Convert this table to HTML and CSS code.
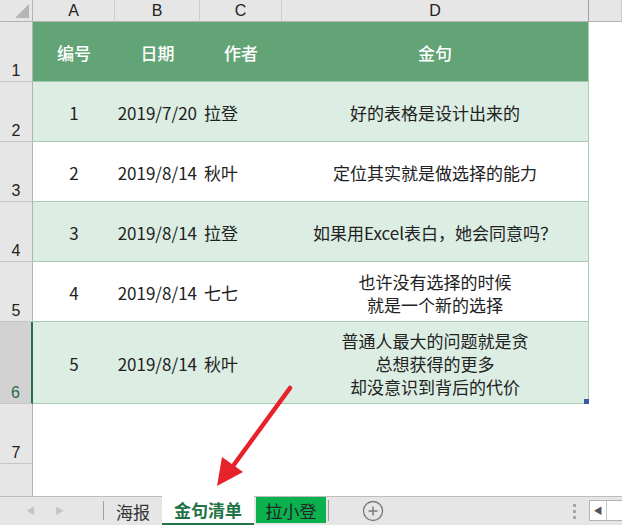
FILE: index.html
```html
<!DOCTYPE html>
<html lang="zh-CN">
<head>
  <meta charset="UTF-8" />
  <title>金句清单</title>
  <link rel="stylesheet" href="styles.css">
</head>
<body>

<div class="sheet">
  <!-- column headers -->
  <div class="corner"><span class="tri"></span></div>
  <div class="colh">A</div>
  <div class="colh">B</div>
  <div class="colh">C</div>
  <div class="colh colh-last">D</div>
  <div class="colh"></div>

  <!-- row 1 -->
  <div class="rowh">1</div>
  <div class="cell head center">编号</div>
  <div class="cell head center">日期</div>
  <div class="cell head center">作者</div>
  <div class="cell head center edge">金句</div>
  <div class="blank"></div>

  <!-- row 2 -->
  <div class="rowh">2</div>
  <div class="cell light center">1</div>
  <div class="cell light right">2019/7/20</div>
  <div class="cell light left">拉登</div>
  <div class="cell light center edge">好的表格是设计出来的</div>
  <div class="blank"></div>

  <!-- row 3 -->
  <div class="rowh">3</div>
  <div class="cell center">2</div>
  <div class="cell right">2019/8/14</div>
  <div class="cell left">秋叶</div>
  <div class="cell center edge">定位其实就是做选择的能力</div>
  <div class="blank"></div>

  <!-- row 4 -->
  <div class="rowh">4</div>
  <div class="cell light center">3</div>
  <div class="cell light right">2019/8/14</div>
  <div class="cell light left">拉登</div>
  <div class="cell light center edge">如果用Excel表白，她会同意吗？</div>
  <div class="blank"></div>

  <!-- row 5 -->
  <div class="rowh">5</div>
  <div class="cell center">4</div>
  <div class="cell right">2019/8/14</div>
  <div class="cell left">七七</div>
  <div class="cell center edge multi">也许没有选择的时候<br>就是一个新的选择</div>
  <div class="blank"></div>

  <!-- row 6 (selected) -->
  <div class="rowh rowh-sel">6</div>
  <div class="cell light center">5</div>
  <div class="cell light right">2019/8/14</div>
  <div class="cell light left">秋叶</div>
  <div class="cell light center edge multi">普通人最大的问题就是贪<br>总想获得的更多<br>却没意识到背后的代价<span class="handle"></span></div>
  <div class="blank"></div>

  <!-- row 7 -->
  <div class="rowh">7</div>
  <div class="blank span5"></div>

  <!-- row 8 -->
  <div class="rowh rowh-cut"></div>
  <div class="blank span5"></div>
</div>

<div class="tabs">
  <div class="tab-nav">
    <span class="nav-arrow">&#9664;</span>
    <span class="nav-arrow">&#9654;</span>
  </div>
  <div class="tab tab-plain">海报</div>
  <div class="tab tab-active">金句清单</div>
  <div class="tab tab-green">拉小登</div>
  <div class="tab-add">
    <svg width="22" height="22" viewBox="0 0 22 22">
      <circle cx="11" cy="11" r="9.5" fill="none" stroke="#7a7a7a" stroke-width="1.3"/>
      <path d="M11 6.5v9M6.5 11h9" stroke="#7a7a7a" stroke-width="1.5"/>
    </svg>
  </div>
  <div class="tab-dots"><i></i><i></i><i></i></div>
  <div class="hscroll"><span class="hscroll-btn">&#9664;</span></div>
</div>

<svg class="arrow" width="622" height="525" viewBox="0 0 622 525">
  <path d="M290 388 L233 466" stroke="#e8222b" stroke-width="4.5" stroke-linecap="round"/>
  <path d="M217 486 L222 457 L243 472 Z" fill="#e8222b"/>
</svg>

</body>
</html>
```

FILE: styles.css
```css
:root {
  --xl-green: #217346;
  --head: #63a476;
  --light: #dcede3;
  --line: #a6cdb3;
}

* {
  box-sizing: border-box;
}

html, body {
  margin: 0;
  height: 100%;
  overflow: hidden;
  background: #fff;
  font-family: "Noto Sans CJK SC", "Noto Sans", sans-serif;
}

.sheet {
  display: grid;
  grid-template-columns: 33px 82px 85px 82px 307px 1fr;
  grid-template-rows: 22px 60px 60px 60px 60px 60px 82px 60px 1fr;
  height: 496px;
}

.corner {
  position: relative;
  background: #e6e6e6;
  border-right: 1px solid #b3b3b3;
  border-bottom: 1px solid #b3b3b3;
}

.tri {
  position: absolute;
  right: 3px;
  bottom: 3px;
  width: 0;
  height: 0;
  border-left: 14px solid transparent;
  border-bottom: 14px solid #b5b5b5;
}

.colh {
  background: #e6e6e6;
  border-right: 1px solid #cdcdcd;
  border-bottom: 1px solid #b3b3b3;
  color: #222;
  font-family: "Liberation Sans", sans-serif;
  font-size: 16px;
  display: flex;
  align-items: center;
  justify-content: center;
  padding-top: 1px;
}

.colh-last {
  border-right-color: #9e9e9e;
}

.rowh {
  background: #e6e6e6;
  border-right: 1px solid #b3b3b3;
  border-bottom: 1px solid #c6c6c6;
  color: #222;
  font-family: "Liberation Sans", sans-serif;
  font-size: 16px;
  display: flex;
  align-items: flex-end;
  justify-content: center;
  padding-bottom: 1px;
}

.rowh-sel {
  background: #d2d2d2;
  color: #2b6a48;
  border-right: 2px solid var(--xl-green);
}

.rowh-cut {
  border-bottom: none;
}

.cell {
  display: flex;
  align-items: center;
  font-size: 17px;
  color: #222;
  background: #fff;
  border-bottom: 1px solid var(--line);
  padding-top: 2px;
  white-space: nowrap;
}

.cell.head {
  background: var(--head);
  color: #fff;
  font-weight: 500;
  border-bottom-color: #9fcbad;
}

.cell.light {
  background: var(--light);
}

.center {
  justify-content: center;
  text-align: center;
}

.right {
  justify-content: flex-end;
  padding-right: 3px;
}

.left {
  justify-content: flex-start;
  padding-left: 4px;
}

.edge {
  position: relative;
  border-right: 1px solid var(--line);
}

.multi {
  line-height: 23px;
}

.handle {
  position: absolute;
  right: -1px;
  bottom: -1px;
  width: 5px;
  height: 5px;
  background: #3c59a8;
}

.blank {
  background: #fff;
}

.span5 {
  grid-column: span 5;
}

.tabs {
  display: flex;
  align-items: stretch;
  height: 29px;
  background: #e6e6e6;
  border-top: 1px solid #bdbdbd;
  font-size: 17px;
}

.tab-nav {
  width: 104px;
  display: flex;
  align-items: center;
  padding-left: 26px;
  gap: 20px;
  border-right: 1px solid #9e9e9e;
  margin: 4px 0 5px;
}

.nav-arrow {
  color: #c4c4c4;
  font-size: 9px;
}

.tab {
  display: flex;
  align-items: center;
  justify-content: center;
  color: #333;
  white-space: nowrap;
}

.tab-plain {
  width: 58px;
}

.tab-active {
  width: 92px;
  background: #fff;
  color: var(--xl-green);
  font-weight: 700;
  border-bottom: 2px solid var(--xl-green);
  margin-top: -1px;
}

.tab-green {
  width: 70px;
  background: #0bb04f;
  color: #222;
  margin: 0 0 2px 2px;
}

.tab-add {
  display: flex;
  align-items: center;
  padding-left: 33px;
  border-left: 1px solid #9e9e9e;
  margin: 3px 0 4px 2px;
}

.tab-dots {
  margin-left: auto;
  margin-right: 13px;
  display: flex;
  flex-direction: column;
  justify-content: center;
  gap: 3px;
}

.tab-dots i {
  display: block;
  width: 3px;
  height: 3px;
  background: #a6a6a6;
}

.hscroll {
  width: 33px;
  margin: 3px 0 4px;
  background: #fff;
  border: 1px solid #b3b3b3;
  border-right: none;
  display: flex;
  align-items: center;
}

.hscroll-btn {
  width: 17px;
  height: 100%;
  font-size: 9px;
  color: #555;
  display: flex;
  align-items: center;
  justify-content: center;
  border-right: 1px solid #c8c8c8;
}

.arrow {
  position: absolute;
  left: 0;
  top: 0;
  pointer-events: none;
}
```
